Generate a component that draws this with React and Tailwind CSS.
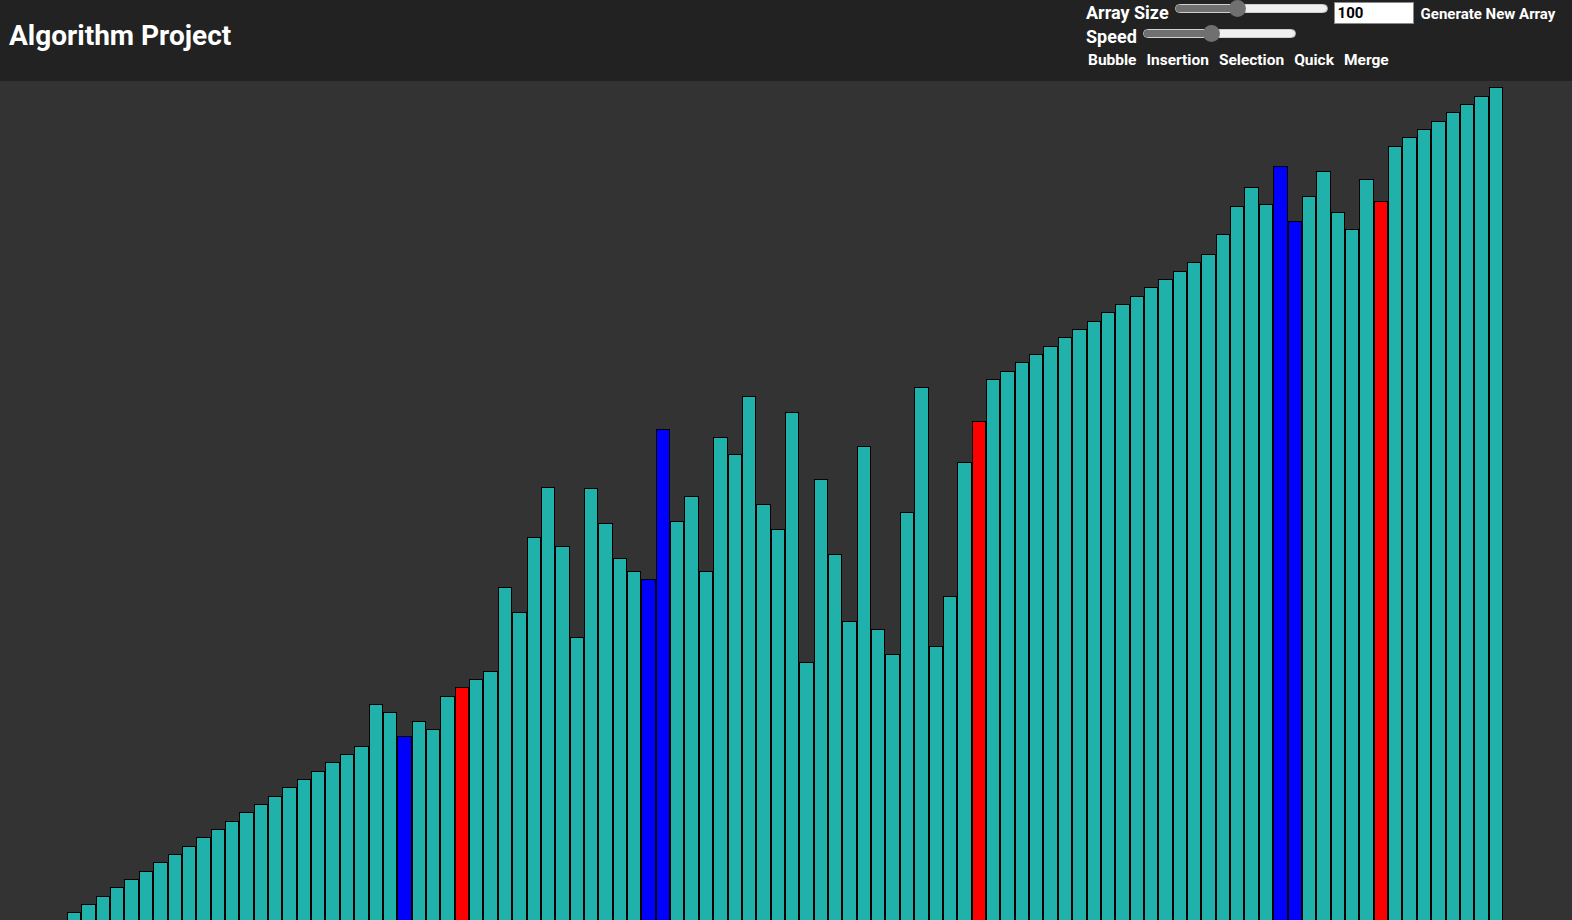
const TOPS = [
  912, 904, 896, 887, 879, 871, 862, 854, 846, 837,
  829, 821, 812, 804, 796, 787, 779, 771, 762, 754,
  746, 704, 712, 736, 721, 729, 696, 687, 679, 671,
  587, 612, 537, 487, 546, 637, 488, 523, 558, 571,
  579, 429, 521, 496, 571, 437, 454, 396, 504, 529,
  412, 662, 479, 554, 621, 446, 629, 654, 512, 387,
  646, 596, 462, 421, 379, 371, 362, 354, 346, 337,
  329, 321, 312, 304, 296, 287, 279, 271, 262, 254,
  234, 206, 187, 204, 166, 221, 196, 171, 212, 229,
  179, 201, 146, 137, 129, 121, 112, 104, 96, 87,
];

const BLUE = new Set([23, 40, 41, 84, 85]);
const RED = new Set([27, 63, 91]);

function Slider({ width, pos }) {
  return (
    <div className="relative h-[17px] shrink-0" style={{ width }}>
      <div className="absolute left-0 right-0 top-[4px] h-[9px] rounded-full overflow-hidden flex border border-[#cfcfcf]">
        <div className="bg-[#707070] h-full" style={{ width: pos }} />
        <div className="bg-[#efefef] h-full flex-1" />
      </div>
      <div
        className="absolute top-0 w-[17px] h-[17px] rounded-full bg-[#707070]"
        style={{ left: pos - 8.5 }}
      />
    </div>
  );
}

export default function App() {
  const font = { fontFamily: "Roboto, 'Liberation Sans', sans-serif" };
  return (
    <div className="w-[1572px] h-[920px] overflow-hidden bg-[#333333]" style={font}>
      <header className="h-[81px] bg-[#222222] flex justify-between">
        <h1 className="text-white font-bold text-[28px] leading-[28px] pt-[22px] pl-[9px]">
          Algorithm Project
        </h1>
        <div className="flex flex-col pr-[14px] pl-0 w-[486px] text-white font-bold">
          <div className="flex items-start h-[25px]">
            <span className="text-[18px] leading-[20px] mt-[3px]">Array Size</span>
            <div className="ml-[6px] mt-0">
              <Slider width={153} pos={63} />
            </div>
            <div className="ml-[6px] mt-[2px] w-[80px] h-[22px] bg-white border border-[#8a8a8a] text-black text-[15px] leading-[20px] pl-[3px]">
              100
            </div>
            <span className="ml-[7px] mt-[5px] text-[15px] leading-[18px]">
              Generate New Array
            </span>
          </div>
          <div className="flex items-start h-[26px]">
            <span className="text-[18px] leading-[20px] mt-[2px]">Speed</span>
            <div className="ml-[6px] mt-[0px]">
              <Slider width={153} pos={69} />
            </div>
          </div>
          <div className="flex items-start gap-[10px] ml-[2px] text-[15.5px] leading-[18px]">
            <span>Bubble</span>
            <span>Insertion</span>
            <span>Selection</span>
            <span>Quick</span>
            <span>Merge</span>
          </div>
        </div>
      </header>
      <main className="h-[839px] flex items-end">
        <div className="ml-[67px] w-[1436px] h-full flex items-end">
          {TOPS.map((t, i) => (
            <div
              key={i}
              className={
                "flex-1 border border-b-0 border-black " +
                (BLUE.has(i) ? "bg-[#0000ff]" : RED.has(i) ? "bg-[#ff0000]" : "bg-[#20b2aa]")
              }
              style={{ height: 920 - t }}
            />
          ))}
        </div>
      </main>
    </div>
  );
}
